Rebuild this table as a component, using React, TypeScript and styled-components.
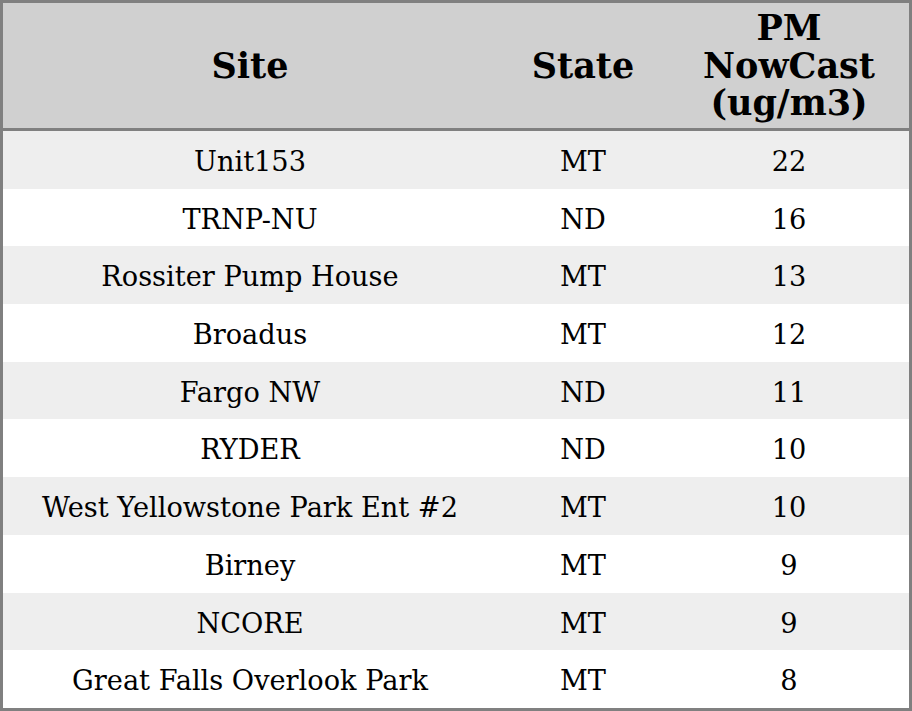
import React from "react";
import styled, { createGlobalStyle } from "styled-components";

const GlobalStyle = createGlobalStyle`
  html, body {
    margin: 0;
    padding: 0;
    background: #ffffff;
  }
`;

const Table = styled.table`
  width: 912px;
  table-layout: fixed;
  border-collapse: separate;
  border-spacing: 0;
  border: 3px solid #808080;
  font-family: "DejaVu Serif", serif;
  color: #000;
`;

const HeadCell = styled.th`
  background: #d0d0d0;
  font-size: 35px;
  font-weight: bold;
  text-align: center;
  vertical-align: middle;
  padding: 6px 4px 6px;
  height: 128px;
  box-sizing: border-box;
  border-bottom: 3px solid #808080;
  line-height: 37.5px;
`;

const Row = styled.tr<{ $shaded: boolean }>`
  background: ${(p) => (p.$shaded ? "#eeeeee" : "#ffffff")};
`;

const Cell = styled.td`
  font-size: 27.2px;
  text-align: center;
  vertical-align: middle;
  padding: 17px 4px 12.7px;
  line-height: 28px;
`;

const rows = [
  { site: "Unit153", state: "MT", pm: 22 },
  { site: "TRNP-NU", state: "ND", pm: 16 },
  { site: "Rossiter Pump House", state: "MT", pm: 13 },
  { site: "Broadus", state: "MT", pm: 12 },
  { site: "Fargo NW", state: "ND", pm: 11 },
  { site: "RYDER", state: "ND", pm: 10 },
  { site: "West Yellowstone Park Ent #2", state: "MT", pm: 10 },
  { site: "Birney", state: "MT", pm: 9 },
  { site: "NCORE", state: "MT", pm: 9 },
  { site: "Great Falls Overlook Park", state: "MT", pm: 8 },
];

export default function App() {
  return (
    <>
      <GlobalStyle />
      <Table>
        <colgroup>
          <col style={{ width: 494 }} />
          <col style={{ width: 172 }} />
          <col style={{ width: 240 }} />
        </colgroup>
        <thead>
          <tr>
            <HeadCell>Site</HeadCell>
            <HeadCell>State</HeadCell>
            <HeadCell>
              PM
              <br />
              NowCast
              <br />
              (ug/m3)
            </HeadCell>
          </tr>
        </thead>
        <tbody>
          {rows.map((r, i) => (
            <Row key={i} $shaded={i % 2 === 0}>
              <Cell>{r.site}</Cell>
              <Cell>{r.state}</Cell>
              <Cell>{r.pm}</Cell>
            </Row>
          ))}
        </tbody>
      </Table>
    </>
  );
}
